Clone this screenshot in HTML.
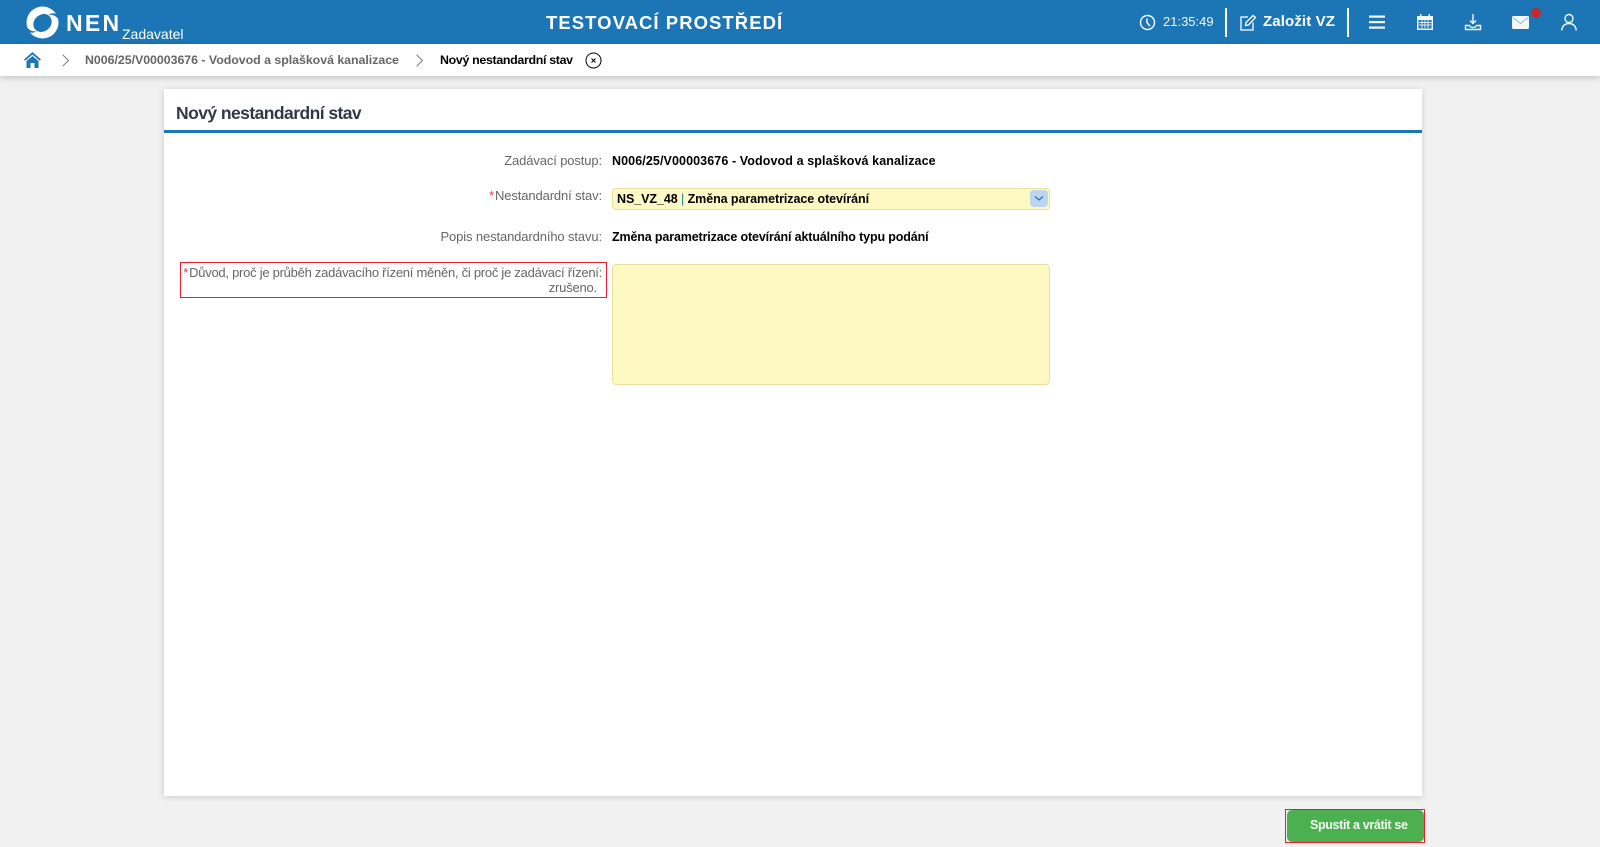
<!DOCTYPE html>
<html lang="cs"><head><meta charset="utf-8"><title>Nový nestandardní stav</title>
<style>
html,body{margin:0;padding:0;width:1600px;height:847px;overflow:hidden;background:#f1f1f1;font-family:"Liberation Sans",sans-serif}
.a{position:absolute;white-space:nowrap}
.lbl{color:#666;font-size:13px;text-align:right;right:998px;line-height:16px;letter-spacing:-.12px}
.val{color:#000;font-size:12.5px;font-weight:bold;left:612px;line-height:16px}
.req{color:#d8364a;margin-right:1px}
</style></head><body>
<div class="a" style="left:0;top:0;width:1600px;height:44px;background:#1c75b5"></div>
<div class="a" style="left:0;top:44px;width:1600px;height:32px;background:#fff;box-shadow:0 2px 6px rgba(0,0,0,.18)"></div>

<svg class="a" style="left:26px;top:6px" width="33" height="33" viewBox="0 0 33 33">
<circle cx="16.5" cy="16.5" r="16" fill="#fff"/>
<ellipse cx="16.5" cy="17" rx="9.800" ry="8.300" transform="rotate(-40 16.500 17)" fill="#1c75b5"/>
<path d="M22 9C26 8.200 29.500 9.500 33 13.500L33 10C30 6.800 26 6.200 22 9Z" fill="#1c75b5"/>
<path d="M10.500 25C7 26 3 24.500 0 20L0 23.500C3 27 7 27.800 10.500 25Z" fill="#1c75b5"/>
</svg>
<div class="a" style="left:66px;top:10px;color:#fff;font-size:23px;font-weight:bold;letter-spacing:2.3px;line-height:26px">NEN</div>
<div class="a" style="left:122px;top:26px;color:#fff;font-size:14px;line-height:16px">Zadavatel</div>
<div class="a" style="left:546px;top:12px;color:#fff;font-size:18.5px;font-weight:bold;letter-spacing:1.05px;line-height:22px">TESTOVACÍ PROSTŘEDÍ</div>

<svg class="a" style="left:1139px;top:14px" width="17" height="17" viewBox="0 0 17 17" fill="none" stroke="#fff" stroke-width="1.400"><circle cx="8.500" cy="8.500" r="7"/><path d="M8 4.500V8.700L11 12"/></svg>
<div class="a" style="left:1163px;top:14px;color:#f2f7fb;font-size:13px;line-height:16px;letter-spacing:0">21:35:49</div>
<div class="a" style="left:1225px;top:8px;width:2px;height:29px;background:#fff"></div>
<svg class="a" style="left:1239px;top:14px" width="18" height="17" viewBox="0 0 18 17" fill="none" stroke="#fff" stroke-width="1.300"><path d="M9 3H2V16H14V8.500"/><path d="M6.500 11.500L7 8.500L14 1.500L16.500 3.500L9.500 11Z"/></svg>
<div class="a" style="left:1263px;top:13px;color:#fff;font-size:15px;font-weight:bold;line-height:18px;letter-spacing:.12px">Založit VZ</div>
<div class="a" style="left:1347px;top:8px;width:2px;height:29px;background:#fff"></div>

<svg class="a" style="left:1369px;top:15px" width="16" height="15" viewBox="0 0 16 15" fill="#f4f8fb"><rect width="16" height="2.200" y="0.500"/><rect width="16" height="2.200" y="6"/><rect width="16" height="2.200" y="11.500"/></svg>
<svg class="a" style="left:1416px;top:13px" width="18" height="18" viewBox="0 0 18 18"><path fill="#f4f8fb" fill-rule="evenodd" d="M1 3H4V1H5.500V3H12.500V1H14V3H17V17H1ZM2.500 7V15.500H15.500V7Z"/><path stroke="#dfeaf3" stroke-width="1" d="M3 9.500H15M3 12H15M6 7V15M9 7V15M12 7V15" fill="none"/></svg>
<svg class="a" style="left:1464px;top:13px" width="18" height="18" viewBox="0 0 18 18" fill="none" stroke="#f4f8fb" stroke-width="1.400"><path d="M9 1V10M6 7.500L9 10.500L12 7.500"/><path d="M1.500 16.500V12.500H5.500Q6 14.500 9 14.500Q12 14.500 12.500 12.500H16.500V16.500Z"/></svg>
<svg class="a" style="left:1512px;top:16px" width="17" height="13" viewBox="0 0 17 13"><rect width="17" height="13" rx="1.500" fill="#f4f8fb"/><path d="M1 1.500L8.500 7.500L16 1.500" fill="none" stroke="#8dbcdc" stroke-width="1"/></svg>
<div class="a" style="left:1531px;top:8px;width:10px;height:10px;border-radius:50%;background:#c62828"></div>
<svg class="a" style="left:1561px;top:13px" width="16" height="18" viewBox="0 0 16 18" fill="none" stroke="#f4f8fb" stroke-width="1.400"><circle cx="8" cy="5.500" r="4"/><path d="M.8 17.500C1 13 4 10.500 8 10.500C12 10.500 15 13 15.200 17.500"/></svg>

<svg class="a" style="left:24px;top:52px" width="17" height="16" viewBox="0 0 17 16" fill="#1c75b5"><path d="M8.500 0L17 7.500L15.800 8.700L8.500 2.500L1.200 8.700L0 7.500Z"/><path d="M8.500 4L14.500 9V16H10.500V11H6.500V16H2.500V9Z"/></svg>
<svg class="a" style="left:61px;top:54px" width="9" height="13" viewBox="0 0 9 13" fill="none" stroke="#777" stroke-width="1"><path d="M1.500 .7L7.500 6.500L1.500 12.300"/></svg>
<div class="a" style="left:85px;top:52px;color:#666;font-size:12.400px;font-weight:bold;line-height:16px;letter-spacing:-.04px">N006/25/V00003676 - Vodovod a splašková kanalizace</div>
<svg class="a" style="left:415px;top:54px" width="9" height="13" viewBox="0 0 9 13" fill="none" stroke="#777" stroke-width="1"><path d="M1.500 .7L7.500 6.500L1.500 12.300"/></svg>
<div class="a" style="left:440px;top:52px;color:#000;font-size:12.400px;font-weight:bold;line-height:16px;letter-spacing:-.32px">Nový nestandardní stav</div>
<svg class="a" style="left:585px;top:52px" width="17" height="17" viewBox="0 0 17 17" fill="none" stroke="#000" stroke-width="1"><circle cx="8.500" cy="8.500" r="7.500"/><path d="M6.500 6.500L10.500 10.500M10.500 6.500L6.500 10.500"/></svg>

<div class="a" style="left:164px;top:89px;width:1258px;height:707px;background:#fff;box-shadow:0 1px 6px rgba(0,0,0,.16)"></div>
<div class="a" style="left:164px;top:129.500px;width:1258px;height:3px;background:#1c75b5"></div>
<div class="a" style="left:176px;top:102px;color:#333a45;font-size:17.500px;font-weight:bold;line-height:22px;letter-spacing:-.56px">Nový nestandardní stav</div>

<div class="a lbl" style="top:153px">Zadávací postup:</div>
<div class="a val" style="top:153px;letter-spacing:.1px">N006/25/V00003676 - Vodovod a splašková kanalizace</div>

<div class="a lbl" style="top:188px"><span class="req">*</span>Nestandardní stav:</div>
<div class="a" style="left:612px;top:188px;width:436px;height:20px;background:#fef8c3;border:1px solid #e8dfa0;border-radius:4px"></div>
<div class="a val" style="left:617px;top:191px;letter-spacing:-.07px">NS_VZ_48 <span style="color:#1c75b5;font-weight:normal">|</span> Změna parametrizace otevírání</div>
<div class="a" style="left:1030px;top:190px;width:18px;height:17px;background:#bcd6f0;border-radius:4px"></div>
<svg class="a" style="left:1034px;top:195px" width="10" height="7" viewBox="0 0 10 7" fill="none" stroke="#1c75b5" stroke-width="1.200"><path d="M1 1.500L5 5L9 1.500"/></svg>

<div class="a lbl" style="top:229px">Popis nestandardního stavu:</div>
<div class="a val" style="top:229px;letter-spacing:-.14px">Změna parametrizace otevírání aktuálního typu podání</div>

<div class="a" style="left:180px;top:262px;width:425px;height:34px;border:1px solid #ed1c2e"></div>
<div class="a lbl" style="top:265px;letter-spacing:-.26px"><span class="req">*</span>Důvod, proč je průběh zadávacího řízení měněn, či proč je zadávací řízení:</div>
<div class="a lbl" style="top:280px;right:1003px;letter-spacing:-.2px">zrušeno.</div>

<div class="a" style="left:612px;top:264px;width:436px;height:119px;background:#fef8c3;border:1px solid #e8dfa0;border-radius:4px"></div>

<div class="a" style="left:1285px;top:809px;width:138px;height:32px;border:1px solid #ed1c2e"></div>
<div class="a" style="left:1287px;top:810px;width:137px;height:32px;background:#4caf50;border-radius:5px"></div>
<div class="a" style="left:1310px;top:817px;color:#f3fbf3;font-size:12.500px;font-weight:bold;line-height:16px;letter-spacing:-.35px">Spustit a vrátit se</div>
</body></html>
